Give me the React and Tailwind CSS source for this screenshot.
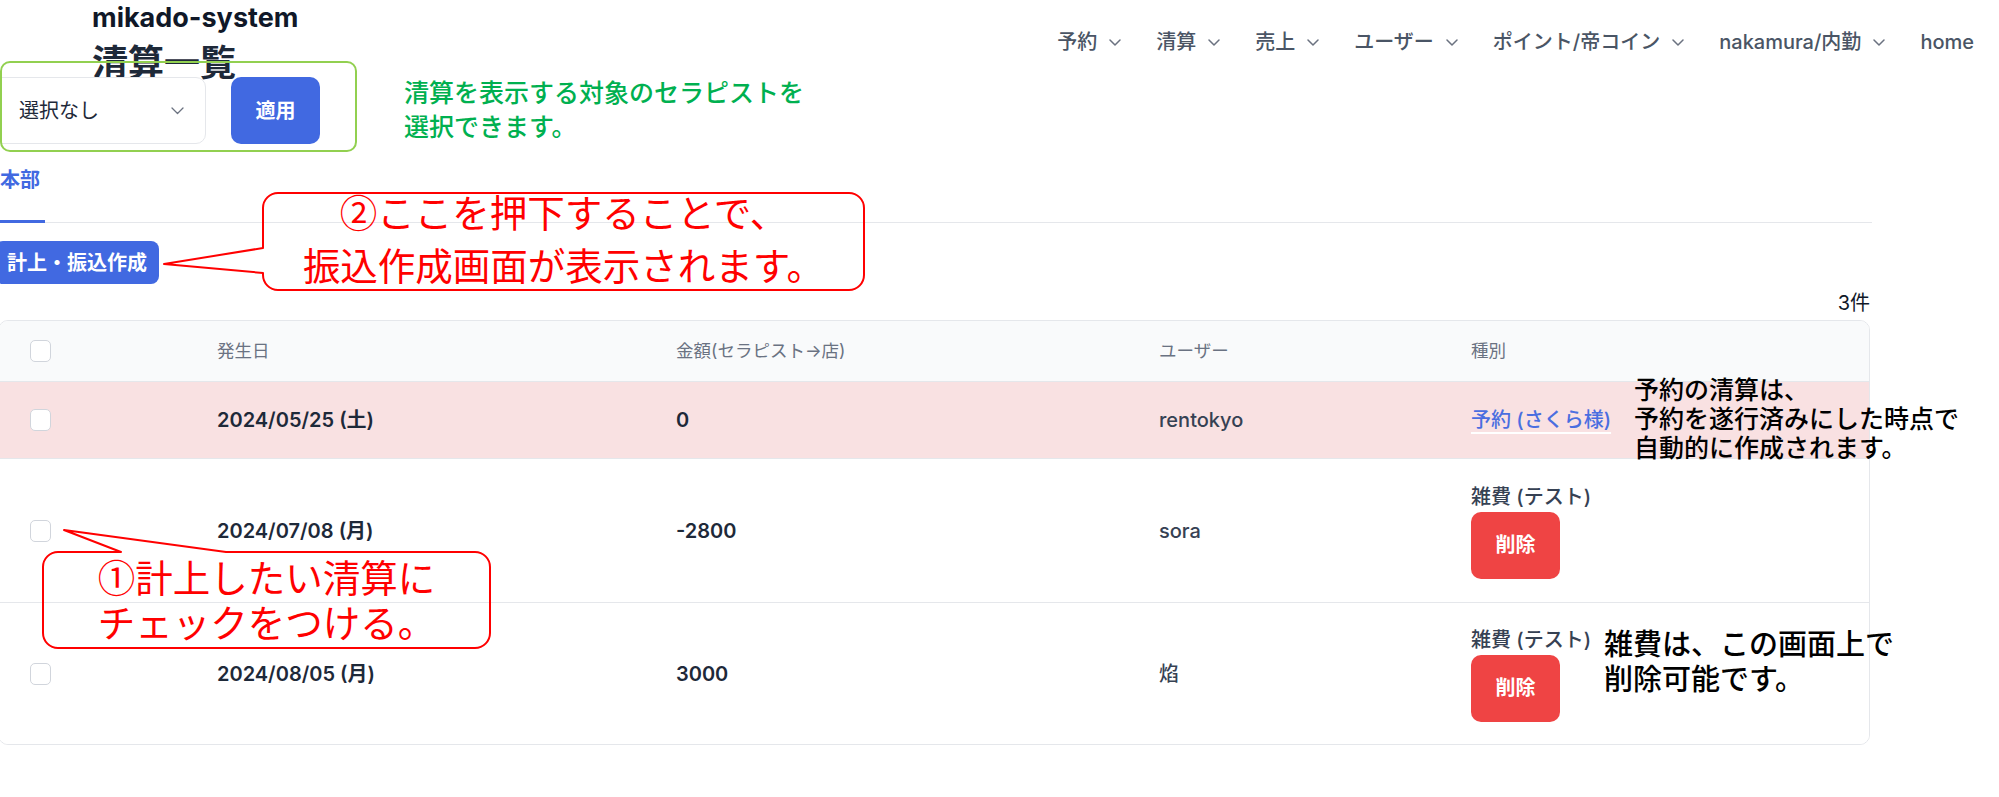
import React from "react";

function Chevron({ className = "" }) {
  return (
    <svg width="12" height="7" viewBox="0 0 12 7" className={className} fill="none">
      <polyline points="1,1 6,6 11,1" stroke="#6b7280" strokeWidth="1.5" strokeLinecap="round" strokeLinejoin="round" />
    </svg>
  );
}

const navItems = ["予約", "清算", "売上", "ユーザー", "ポイント/帝コイン", "nakamura/内勤"];

function Checkbox() {
  return <div className="h-[22px] w-[21px] rounded-[5px] border border-gray-300 bg-white" />;
}

function DeleteBlock() {
  return (
    <div className="flex flex-col items-start">
      <div className="text-[20px] leading-[28px] font-medium text-gray-700">雑費 (テスト)</div>
      <button className="mt-[1px] flex h-[67px] w-[89px] items-center justify-center rounded-[10px] bg-[#ef4444] text-[20px] font-bold text-white">
        削除
      </button>
    </div>
  );
}

export default function App() {
  const rows = [
    {
      date: "2024/07/08 (月)",
      amount: "-2800",
      user: "sora",
      h: "h-[144px]",
    },
    {
      date: "2024/08/05 (月)",
      amount: "3000",
      user: "焰",
      h: "h-[142px]",
    },
  ];
  return (
    <div className="relative h-[797px] w-[1999px] overflow-hidden bg-white text-gray-800 font-['Inter','Noto_Sans_CJK_JP',sans-serif]">
      {/* header */}
      <header className="flex h-[77px] justify-between">
        <div className="pl-[92px] pt-[4px]">
          <div className="text-[27px] leading-[27px] font-bold text-gray-900">mikado-system</div>
          <h1 className="mt-[14px] text-[36px] leading-[36px] font-bold text-gray-800">清算一覧</h1>
        </div>
        <nav className="flex items-start gap-[35px] pr-[25px] pt-[28px] text-[20px] leading-[28px] font-medium text-gray-600">
          {navItems.map((n) => (
            <div key={n} className="flex items-center gap-[12px]">
              <span>{n}</span>
              <Chevron />
            </div>
          ))}
          <span>home</span>
        </nav>
      </header>

      {/* filter row */}
      <div className="flex h-[67px] gap-[25px]">
        <div className="-ml-[10px] flex w-[216px] items-center justify-between rounded-[10px] border border-gray-200 bg-white pl-[28px] pr-[21px] text-[20px] text-gray-800">
          <span>選択なし</span>
          <svg width="13" height="8" viewBox="0 0 13 8" fill="none">
            <polyline points="1,1 6.5,6.5 12,1" stroke="#6b7280" strokeWidth="1.3" strokeLinecap="round" strokeLinejoin="round" />
          </svg>
        </div>
        <button className="w-[89px] rounded-[10px] bg-[#4169e1] text-[20px] font-bold text-white">適用</button>
      </div>

      {/* tabs */}
      <div className="flex h-[79px] w-[1872px] items-end border-b border-gray-200">
        <div className="-mb-px w-[45px] border-b-[3px] border-[#4169e1] pb-[26px] text-[20px] leading-[28px] font-bold text-[#4169e1]">
          本部
        </div>
      </div>

      <button className="-ml-[5px] mt-[18px] flex h-[43px] items-center rounded-[8px] bg-[#4169e1] px-[12px] text-[20px] font-bold text-white">
        計上・振込作成
      </button>

      <div className="mt-[5px] w-[1872px] pr-[2px] text-right text-[20px] leading-[28px] text-gray-900">3件</div>

      {/* table */}
      <div className="-ml-[2px] mt-[3px] w-[1872px] overflow-hidden rounded-[10px] border border-gray-200">
        <div className="grid h-[60px] grid-cols-[218px_459px_483px_312px_1fr] items-center bg-[#f9fafb] text-[17.5px] text-gray-500">
          <div className="pl-[31px]"><Checkbox /></div>
          <div>発生日</div>
          <div>金額(セラピスト→店)</div>
          <div>ユーザー</div>
          <div>種別</div>
        </div>
        <div className="grid h-[77px] grid-cols-[218px_459px_483px_312px_1fr] items-center border-t border-gray-200 bg-[#f9e1e2] text-[20px]">
          <div className="pl-[31px]"><Checkbox /></div>
          <div className="font-semibold text-gray-800">2024/05/25 (土)</div>
          <div className="font-semibold text-gray-800">0</div>
          <div className="font-medium text-gray-700">rentokyo</div>
          <div>
            <span className="font-medium text-[#4a6ee0] underline decoration-white underline-offset-[5px]">予約 (さくら様)</span>
          </div>
        </div>
        {rows.map((r) => (
          <div
            key={r.date}
            className={`grid ${r.h} grid-cols-[218px_459px_483px_312px_1fr] items-center border-t border-gray-200 bg-white text-[20px]`}
          >
            <div className="pl-[31px]"><Checkbox /></div>
            <div className="font-semibold text-gray-800">{r.date}</div>
            <div className="font-semibold text-gray-800">{r.amount}</div>
            <div className="font-medium text-gray-700">{r.user}</div>
            <div><DeleteBlock /></div>
          </div>
        ))}
      </div>

      {/* annotations */}
      <div className="pointer-events-none absolute left-0 top-[61px] h-[91px] w-[357px] rounded-[10px] border-2 border-[#92d050]" />
      <div className="absolute left-[404px] top-[76px] text-[25px] leading-[34px] font-medium text-[#00b050]">
        清算を表示する対象のセラピストを
        <br />
        選択できます。
      </div>

      <svg className="pointer-events-none absolute left-0 top-0" width="1999" height="797" viewBox="0 0 1999 797" fill="none">
        <path
          d="M 278 193 H 849 A 15 15 0 0 1 864 208 V 275 A 15 15 0 0 1 849 290 H 278 A 15 15 0 0 1 263 275 V 273 L 164 264 L 263 248 V 208 A 15 15 0 0 1 278 193 Z"
          stroke="#ff0000"
          strokeWidth="2"
          strokeLinejoin="round"
        />
        <path
          d="M 58 552 H 121 L 64 530 L 226 552 H 475 A 15 15 0 0 1 490 567 V 633 A 15 15 0 0 1 475 648 H 58 A 15 15 0 0 1 43 633 V 567 A 15 15 0 0 1 58 552 Z"
          stroke="#ff0000"
          strokeWidth="2"
          strokeLinejoin="round"
        />
      </svg>

      <div className="absolute left-[263px] top-[184px] flex w-[601px] flex-col items-center text-[37.5px] leading-[53px] font-normal text-[#ff0000] font-['Noto_Sans_CJK_JP',sans-serif]">
        <div>②ここを押下することで、</div>
        <div>振込作成画面が表示されます。</div>
      </div>

      <div className="absolute left-[43px] top-[552px] flex h-[96px] w-[447px] flex-col items-center pt-[1px] text-[37.5px] leading-[45px] font-normal text-[#ff0000] font-['Noto_Sans_CJK_JP',sans-serif]">
        <div>①計上したい清算に</div>
        <div>チェックをつける。</div>
      </div>

      <div className="absolute left-[1634px] top-[374px] text-[25px] leading-[29px] font-medium text-black font-['Noto_Sans_CJK_JP',sans-serif]">
        予約の清算は、
        <br />
        予約を遂行済みにした時点で
        <br />
        自動的に作成されます。
      </div>

      <div className="absolute left-[1604px] top-[625px] text-[29px] leading-[35px] font-medium text-black font-['Noto_Sans_CJK_JP',sans-serif]">
        雑費は、この画面上で
        <br />
        削除可能です。
      </div>
    </div>
  );
}
